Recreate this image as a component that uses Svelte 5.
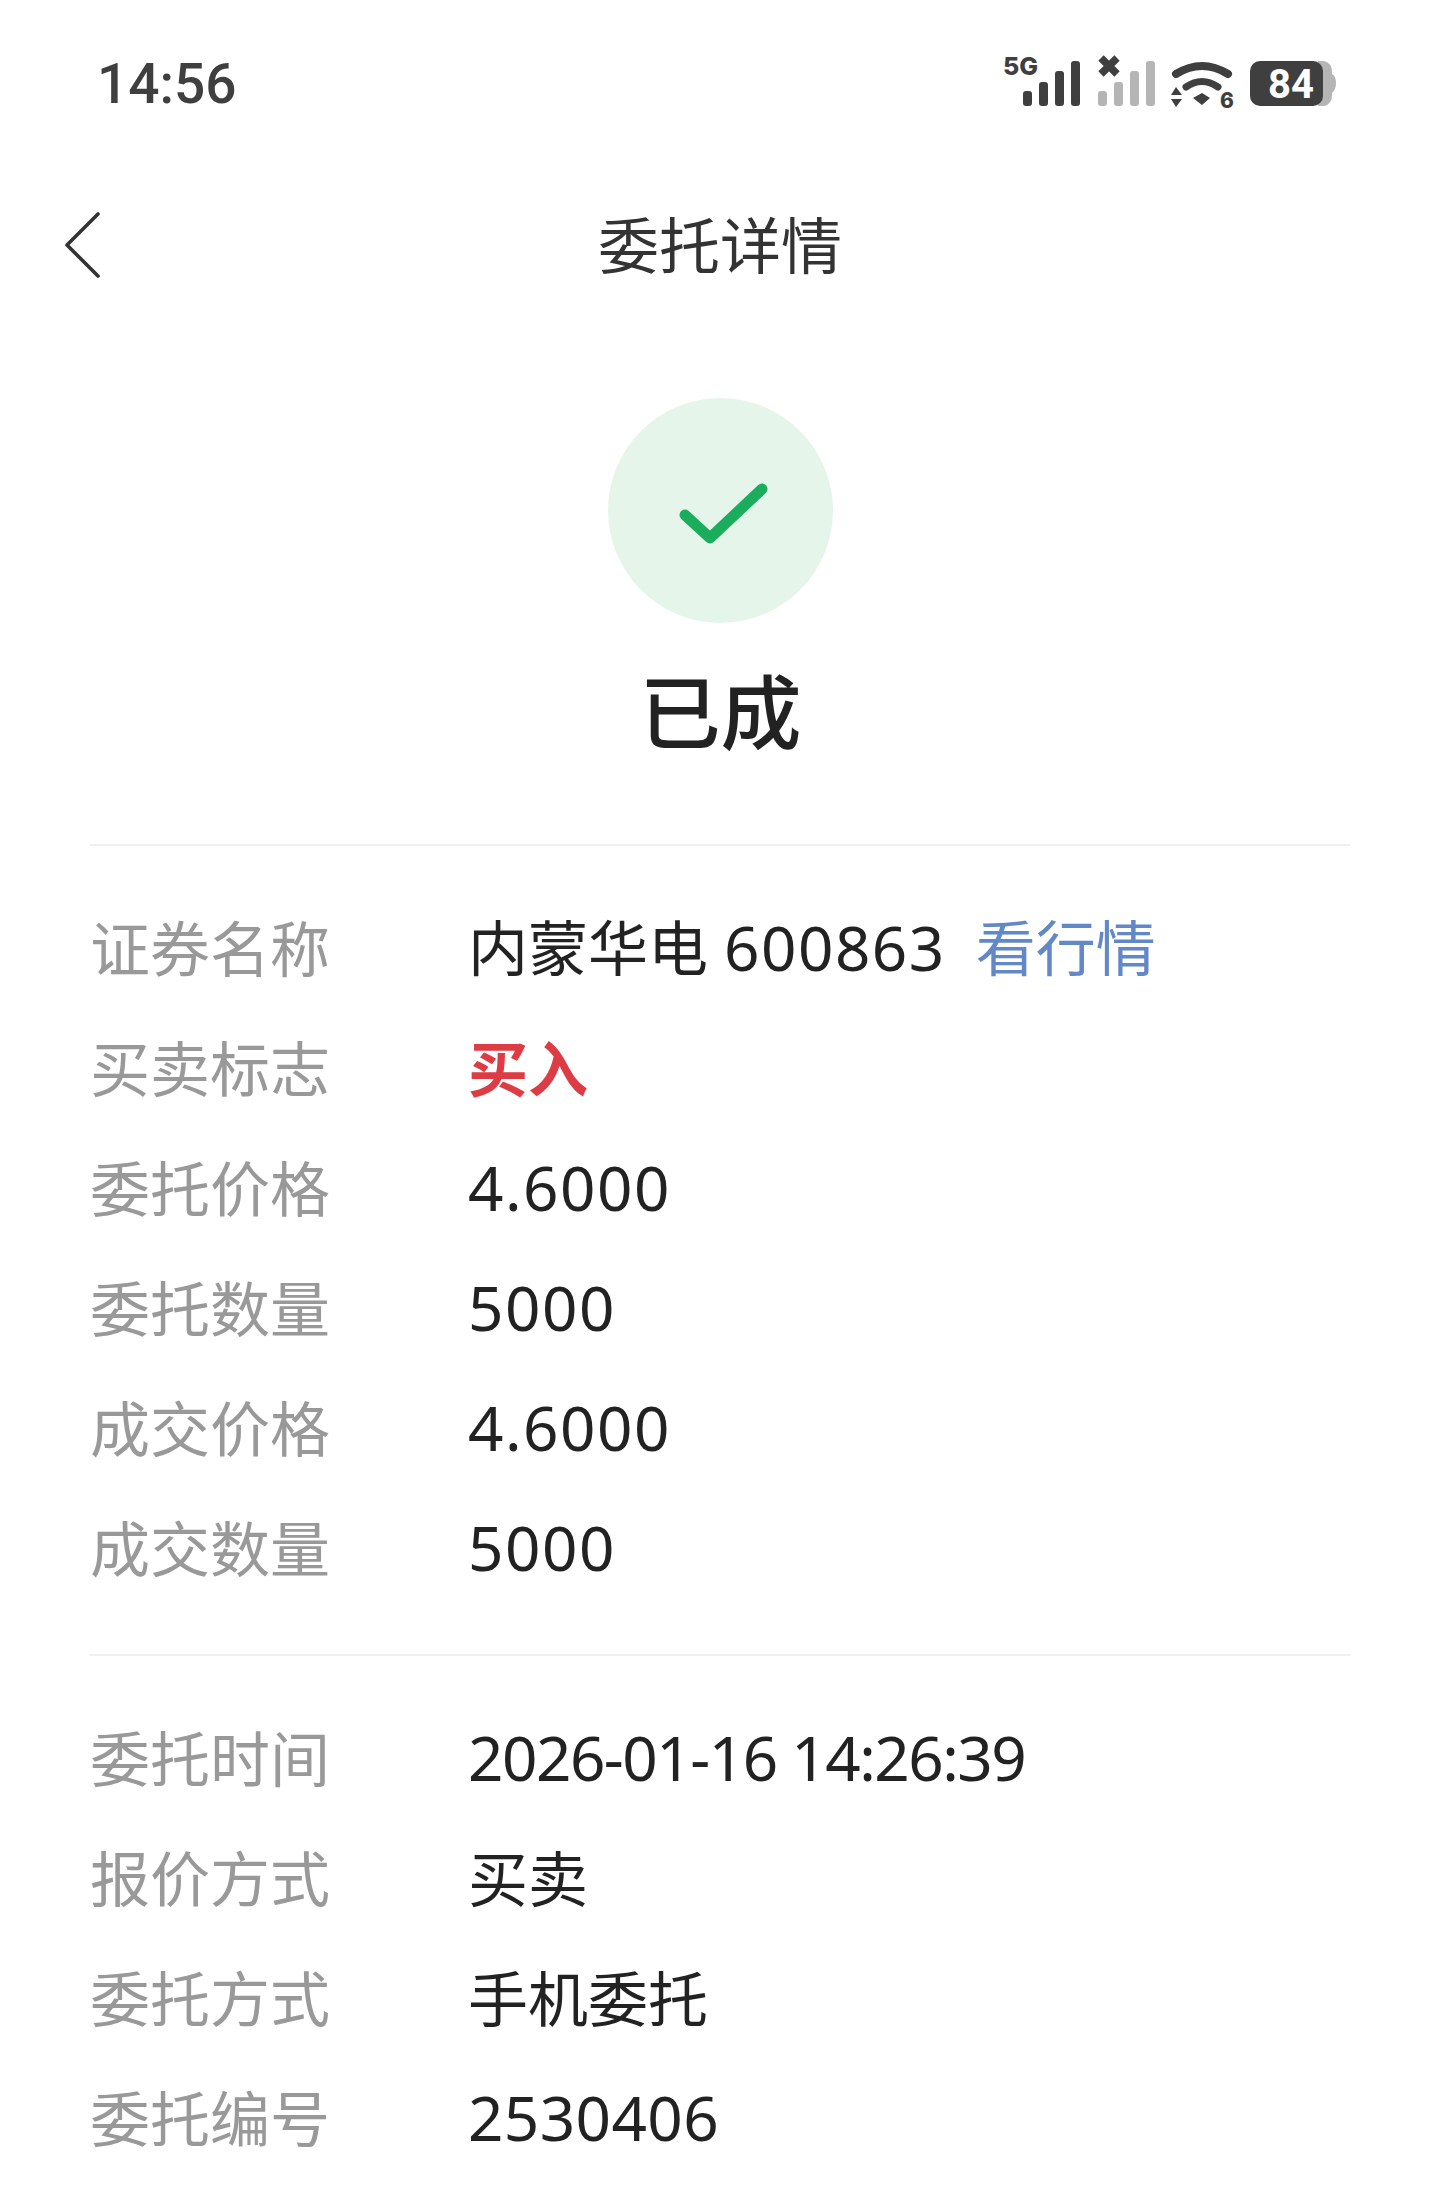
<script lang="ts">
  const orderRows = [
    { label: '证券名称', name: '内蒙华电', value: '600863', link: '看行情' },
    { label: '买卖标志', text: '买入', tone: 'buy' },
    { label: '委托价格', value: '4.6000' },
    { label: '委托数量', value: '5000' },
    { label: '成交价格', value: '4.6000' },
    { label: '成交数量', value: '5000' }
  ];

  const metaRows = [
    { label: '委托时间', value: '2026-01-16 14:26:39', track: -1.5 },
    { label: '报价方式', text: '买卖' },
    { label: '委托方式', text: '手机委托' },
    { label: '委托编号', value: '2530406', track: 0.4 }
  ];

  const groups = [orderRows, metaRows];

  const grayBars = [138, 154, 170, 186];
  const darkBars = [63, 79, 95, 111];
  const barTops = [61, 52, 41, 31];
</script>

<div class="page">
  <header class="status-bar">
    <span class="time">14:56</span>
    <svg class="status-icons" width="400" height="90" viewBox="0 0 400 90">
      <text x="43" y="45" class="net">5G</text>
      {#each darkBars as x, i}
        <rect {x} y={barTops[i]} width="9" height={76 - barTops[i]} rx="3" fill="#3f3f3f" />
      {/each}
      <path d="M141 28 L157 44 M157 28 L141 44" stroke="#3f3f3f" stroke-width="7.5" fill="none" />
      {#each grayBars as x, i}
        <rect {x} y={barTops[i]} width="9" height={76 - barTops[i]} rx="3" fill="#b5b5b5" />
      {/each}
      <path d="M216 44 Q242 28 268 44" stroke="#3f3f3f" stroke-width="8" stroke-linecap="round" fill="none" />
      <path d="M226 57 Q242 46 258 57" stroke="#3f3f3f" stroke-width="7" stroke-linecap="round" fill="none" />
      <path d="M233 68 L242 63 L250 68 L242 75 Z" fill="#3f3f3f" />
      <path d="M211 65 L216 57 L222 65 Z M211 69 L222 69 L216 77 Z" fill="#3f3f3f" />
      <text x="260" y="78" class="wifi-six">6</text>
      <path d="M358 31 H364 Q372 33 372 42 V44 Q376 46 376 53 Q376 60 372 63 V65 Q372 74 364 76 H358 Z" fill="#b5b5b5" />
      <rect x="290" y="31" width="73" height="45" rx="10" fill="#3f3f3f" />
      <text x="308" y="68" class="battery">84</text>
    </svg>
  </header>

  <nav class="nav">
    <button class="back" aria-label="返回">
      <svg width="40" height="70" viewBox="0 0 40 70">
        <path d="M34 4 L3 35 L34 66" stroke="#333" stroke-width="3.6" stroke-linecap="round" stroke-linejoin="round" fill="none" />
      </svg>
    </button>
    <h1>委托详情</h1>
  </nav>

  <section class="result">
    <div class="circle">
      <svg width="100" height="76" viewBox="0 0 100 76">
        <path d="M14 42 L39 65 L91 16" stroke="#1aad5c" stroke-width="11" stroke-linecap="round" stroke-linejoin="round" fill="none" />
      </svg>
    </div>
    <div class="state">已成</div>
  </section>

  {#each groups as rows}
    <section class="group">
      {#each rows as row}
        <div class="row">
          <span class="label">{row.label}</span>
          <span class="value" class:buy={row.tone === 'buy'}>
            {#if row.name}<span class="name">{row.name}</span>{/if}
            {#if row.text}{row.text}{/if}
            {#if row.value}<span class="num" style="letter-spacing: {row.track ?? 1.5}px">{row.value}</span>{/if}
            {#if row.link}<a class="link" href="#quote">{row.link}</a>{/if}
          </span>
        </div>
      {/each}
    </section>
  {/each}
</div>

<style>
  :global(body) {
    margin: 0;
    background: #fff;
  }

  .page {
    width: 1440px;
    height: 2197px;
    overflow: hidden;
    background: #fff;
    font-family: "Noto Sans CJK SC", sans-serif;
    color: #222;
  }

  .status-bar {
    display: flex;
    justify-content: space-between;
    height: 90px;
    padding: 30px 80px 0 97px;
  }

  .time {
    font-family: Roboto, sans-serif;
    font-size: 55px;
    font-weight: 500;
    line-height: 108px;
    color: #3f3f3f;
  }

  .status-icons {
    display: block;
  }

  .net, .wifi-six {
    font-family: Inter, sans-serif;
    font-weight: 800;
    fill: #3f3f3f;
  }

  .net {
    font-size: 25px;
  }

  .wifi-six {
    font-size: 21px;
  }

  .battery {
    font-family: Roboto, sans-serif;
    font-weight: 700;
    font-size: 40px;
    fill: #fff;
  }

  .nav {
    display: flex;
    justify-content: center;
    align-items: center;
    height: 250px;
    position: relative;
  }

  .nav h1 {
    margin: 0 0 6px;
    font-size: 61px;
    font-weight: 400;
    color: #333;
  }

  .back {
    position: absolute;
    left: 64px;
    top: 90px;
    padding: 0;
    border: none;
    background: none;
  }

  .back svg {
    display: block;
  }

  .result {
    display: flex;
    flex-direction: column;
    align-items: center;
    padding-top: 28px;
    margin-left: 1px;
  }

  .circle {
    display: flex;
    align-items: center;
    justify-content: center;
    width: 225px;
    height: 225px;
    border-radius: 50%;
    background: #e6f5ea;
  }

  .state {
    margin-top: 27px;
    font-size: 81px;
    font-weight: 500;
    line-height: 116px;
    color: #222;
  }

  .group {
    margin: 0 90px;
    padding: 39px 0 49px;
    border-top: 2px solid #f0f0f0;
  }

  .result + .group {
    margin-top: 78px;
  }

  .row {
    display: flex;
    align-items: center;
    height: 120px;
  }

  .label {
    width: 378px;
    flex-shrink: 0;
    font-size: 60px;
    color: #999;
  }

  .value {
    display: flex;
    align-items: baseline;
    font-size: 60px;
    color: #222;
  }

  .value.buy {
    color: #dd3c44;
    font-weight: 600;
  }

  .num {
    padding-top: 4px;
    font-family: "Noto Sans", sans-serif;
    font-size: 62px;
  }

  .name + .num {
    margin-left: 16px;
  }

  .link {
    margin-left: 30px;
    color: #6288c8;
    text-decoration: none;
  }
</style>
